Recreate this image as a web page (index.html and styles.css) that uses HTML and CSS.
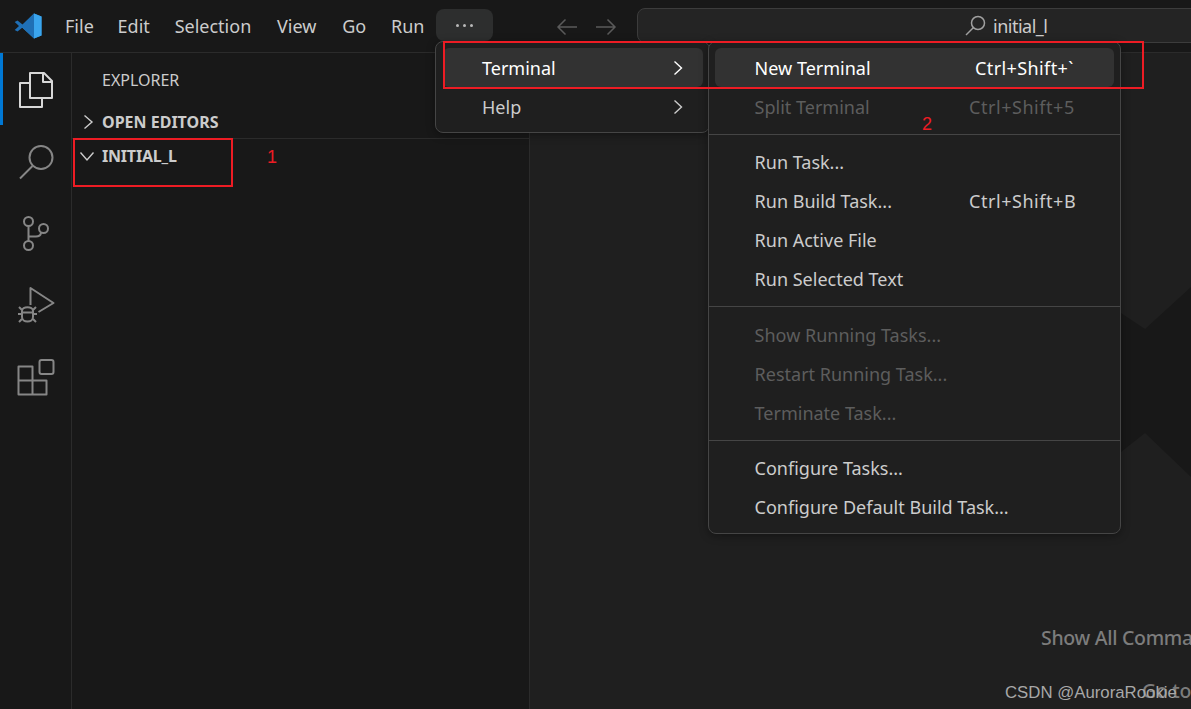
FILE: index.html
```html
<!DOCTYPE html>
<html lang="en">
<head>
<meta charset="utf-8">
<title>Visual Studio Code</title>
<link rel="stylesheet" href="styles.css">
</head>
<body>
<div class="app">
  <header class="titlebar">
    <svg class="logo" viewBox="0 0 28 26">
      <path fill="#2a8fd6" d="M20 0.5 27.5 3.5V22.5L20 25.5 7 13.5Z"/>
      <path fill="#1f6fb5" d="M20 6.5 10 13 20 19.5ZM20 .5 8.5 11.5 3.5 7.5 .7 9 5 13 .7 17 3.5 18.5 8.5 14.5 20 25.5 20 19.5 11.5 13 20 6.5Z"/>
      <path fill="#3aa5ee" d="M20 .5 27.5 3.5V22.5L20 25.5V6.5Z"/>
    </svg>
    <nav class="menubar">
      <span>File</span><span>Edit</span><span>Selection</span><span>View</span><span>Go</span><span>Run</span>
    </nav>
    <div class="more"><i></i><i></i><i></i></div>
    <div class="nav-arrows">
      <svg viewBox="0 0 22 18"><path d="M21 9H2M9.500 1.500 2 9l7.500 7.500"/></svg>
      <svg viewBox="0 0 22 18"><path d="M1 9H20M12.500 1.500 20 9l-7.500 7.500"/></svg>
    </div>
    <div class="searchbox">
      <svg viewBox="0 0 21 21"><circle cx="13" cy="8" r="6.500"/><path d="M8.500 12.500 1 20"/></svg>
      <span>initial_l</span>
    </div>
  </header>
  <div class="body">
    <aside class="activity">
      <div class="act act-active">
        <svg class="ic-files" viewBox="0 0 34 37"><path d="M11 27V2h14l8 8v17zM24 2v9h9"/><path d="M11 12H1v24h22V27"/></svg>
      </div>
      <div class="act">
        <svg class="ic-search" viewBox="0 0 37 37"><circle cx="24" cy="14.500" r="11.500"/><path d="M15.500 23 3 35.500"/></svg>
      </div>
      <div class="act">
        <svg class="ic-scm" viewBox="0 0 30 37"><circle cx="7.500" cy="6.500" r="4.500"/><circle cx="22.500" cy="13.500" r="4.500"/><circle cx="7.500" cy="30.500" r="4.500"/><path d="M7.500 11V26M7.500 21.500H15C18 21.500 19.500 20.500 20 18"/></svg>
      </div>
      <div class="act">
        <svg class="ic-debug" viewBox="0 0 38 38"><path d="M13.500 19V2l23 15-15 9"/><path d="M5 25c0-5 11-5 11 0v6c0 6-11 6-11 0zM5 28H1M16 28H20M5 24 2 21M16 24l3-3M5 33l-3 3M16 33l3 3M5 26.500h11"/></svg>
      </div>
      <div class="act">
        <svg class="ic-ext" viewBox="0 0 38 37"><path d="M1.500 7.500h14v28h-14zM1.500 21.500h28v14h-14"/><rect x="22.500" y="1" width="14" height="14" rx="2"/></svg>
      </div>
    </aside>
    <aside class="sidebar">
      <div class="side-title">EXPLORER</div>
      <div class="section section-open">
        <svg class="chev" viewBox="0 0 12 16"><path d="M2.500 1.500 10 8l-7.500 6.500"/></svg>
        <span>OPEN EDITORS</span>
      </div>
      <div class="section section-folder">
        <svg class="chev chev-down" viewBox="0 0 16 12"><path d="M1.500 2.500 8 10l6.500-7.500"/></svg>
        <span>INITIAL_L</span>
      </div>
    </aside>
    <main class="editor">
      <svg class="watermark" viewBox="0 0 70 190"><path d="M0 26 24 42 70 0V190L24 146 0 165Z"/></svg>
      <div class="hint hint-commands">Show All Commands</div>
      <div class="hint hint-goto">Go to File</div>
    </main>
  </div>

  <div class="menu menu-main">
    <div class="item active"><span class="label">Terminal</span><svg class="arrow" viewBox="0 0 10 16"><path d="M1.500 1.500 8.500 8l-7 6.500"/></svg></div>
    <div class="item"><span class="label">Help</span><svg class="arrow" viewBox="0 0 10 16"><path d="M1.500 1.500 8.500 8l-7 6.500"/></svg></div>
  </div>

  <div class="menu menu-sub">
    <div class="item active"><span class="label">New Terminal</span><span class="key key-new">Ctrl+Shift+`</span></div>
    <div class="item off"><span class="label">Split Terminal</span><span class="key">Ctrl+Shift+5</span></div>
    <hr>
    <div class="item"><span class="label">Run Task...</span></div>
    <div class="item"><span class="label">Run Build Task...</span><span class="key">Ctrl+Shift+B</span></div>
    <div class="item"><span class="label">Run Active File</span></div>
    <div class="item"><span class="label">Run Selected Text</span></div>
    <hr class="hr-wide">
    <div class="item off"><span class="label">Show Running Tasks...</span></div>
    <div class="item off"><span class="label">Restart Running Task...</span></div>
    <div class="item off"><span class="label">Terminate Task...</span></div>
    <hr>
    <div class="item"><span class="label">Configure Tasks...</span></div>
    <div class="item"><span class="label">Configure Default Build Task...</span></div>
  </div>

  <div class="mark mark-1"></div>
  <div class="mark mark-2"></div>
  <div class="num num-1">1</div>
  <div class="num num-2">2</div>
  <div class="csdn">CSDN @AuroraRookie</div>
</div>
</body>
</html>
```

FILE: styles.css
```css
* { box-sizing: border-box; }
html, body { margin: 0; height: 100%; }
body {
  background: #181818;
  color: #ccc;
  font-family: "Noto Sans", "Open Sans", sans-serif;
  font-size: 18px;
  overflow: hidden;
}
.app { position: relative; width: 1191px; height: 709px; overflow: hidden; display: flex; flex-direction: column; }

.titlebar {
  height: 53px;
  flex: none;
  display: flex;
  align-items: flex-start;
  background: #181818;
  border-bottom: 1px solid #2b2b2b;
}
.logo { width: 28px; height: 26px; margin: 13px 0 0 14px; flex: none; }
.menubar { display: flex; gap: 24.800px; margin: 14px 0 0 23px; line-height: 24px; color: #ccc; width: 371px; flex: none; white-space: nowrap; }
.menubar span:nth-child(n+2):nth-child(-n+3) { position: relative; left: -1px; }
.menubar span:nth-child(n+5) { position: relative; left: 1px; }
.more {
  width: 57px; height: 32px; margin-top: 9px; flex: none;
  background: #2d2e2e; border-radius: 8px;
  display: flex; align-items: center; justify-content: center; gap: 4px;
}
.more i { width: 3px; height: 3px; border-radius: 50%; background: #b8b8b8; }
.nav-arrows { display: flex; gap: 17px; margin: 18px 0 0 63px; flex: none; }
.nav-arrows svg { width: 22px; height: 18px; fill: none; stroke: #5a5a5a; stroke-width: 1.500; }
.searchbox {
  position: relative;
  flex: none;
  width: 600px;
  height: 35px;
  margin: 8px 0 0 20px;
  background: #242424;
  border: 1px solid #3c3c3c;
  border-radius: 8px;
  display: flex; align-items: center;
  padding-left: 327px;
  color: #ccc;
  gap: 7px;
  letter-spacing: -.5px;
}
.searchbox svg { width: 21px; height: 21px; fill: none; stroke: #a0a0a0; stroke-width: 1.500; }

.body { flex: 1; display: flex; min-height: 0; }
.activity { width: 72px; flex: none; border-right: 1px solid #2b2b2b; background: #181818; }
.act { height: 72px; display: flex; align-items: center; justify-content: center; }
.act svg { fill: none; stroke: #868686; stroke-width: 2; stroke-linejoin: round; }
.act-active { border-left: 3px solid #0078d4; padding-right: 3px; }
.ic-files { width: 34px; height: 37px; stroke: #d7d7d7 !important; }
.ic-search { width: 37px; height: 37px; }
.ic-scm { width: 30px; height: 37px; }
.ic-debug { width: 38px; height: 38px; }
.ic-ext { width: 38px; height: 37px; }

.sidebar { width: 458px; flex: none; border-right: 1px solid #2b2b2b; background: #181818; }
.side-title { height: 54px; padding: 15px 0 0 30px; font-size: 16px; line-height: 24px; color: #ccc; }
.section { display: flex; align-items: center; font-weight: 700; font-size: 16px; color: #ccc; line-height: 24px; }
.section-open { height: 32px; padding: 0 0 2px 10px; border-bottom: 1px solid #2b2b2b; }
.section-folder { height: 34px; padding-left: 7px; letter-spacing: -.2px; }
.chev { width: 12px; height: 16px; fill: none; stroke: #ccc; stroke-width: 1.400; margin-right: 8px; flex: none; }
.chev-down { width: 16px; height: 12px; margin-right: 7px; }

.editor { flex: 1; position: relative; background: #1f1f1f; overflow: hidden; }
.watermark { position: absolute; left: 591px; top: 234px; width: 70px; height: 190px; fill: #181818; }
.hint { position: absolute; white-space: nowrap; color: #7c7c7c; font-size: 19.500px; font-weight: 500; line-height: 26px; letter-spacing: -.3px; }
.hint-commands { left: 511px; top: 572px; }
.hint-goto { left: 612px; top: 625px; }

.menu {
  position: absolute;
  background: #1f1f1f;
  border: 1px solid #454545;
  border-radius: 8px;
  padding: 6px;
  box-shadow: 0 2px 8px rgba(0, 0, 0, .36);
}
.menu-main { left: 435px; top: 41px; width: 275px; height: 92px; z-index: 2; }
.menu-sub { left: 708px; top: 41px; width: 413px; height: 493px; z-index: 3; }
.item { height: 39px; display: flex; align-items: center; border-radius: 6px; color: #ccc; white-space: nowrap; position: relative; }
.item.active { background: #323232; color: #fff; }
.item.off { color: #5d5d5d; }
.menu-main .item { margin-left: 1px; }
.menu-main .label { margin-left: 39px; }
.menu-main .arrow { width: 10px; height: 16px; margin-left: auto; margin-right: 20px; fill: none; stroke: currentColor; stroke-width: 1.400; }
.menu-sub .label { margin-left: 39.600px; }
.key { position: absolute; left: 254px; letter-spacing: .55px; }
.key-new { left: 260px; letter-spacing: .4px; }
hr { border: 0; border-top: 1px solid #454545; margin: 8px -6px 7px; height: 0; }
hr.hr-wide { margin-bottom: 8px; }

.mark { position: absolute; border: 2px solid #ed1c24; z-index: 5; }
.mark-1 { left: 73px; top: 138px; width: 160px; height: 49px; }
.mark-2 { left: 443px; top: 41px; width: 701px; height: 48px; }
.num { position: absolute; color: #ed1c24; font-size: 18px; line-height: 24px; z-index: 5; font-family: "Liberation Sans", sans-serif; }
.num-1 { left: 267px; top: 145px; }
.num-2 { left: 922px; top: 112px; }
.csdn { position: absolute; left: 1005px; top: 682px; color: #a8a8a8; font-family: "Liberation Sans", sans-serif; font-size: 16.800px; line-height: 22px; white-space: nowrap; z-index: 5; }
```
